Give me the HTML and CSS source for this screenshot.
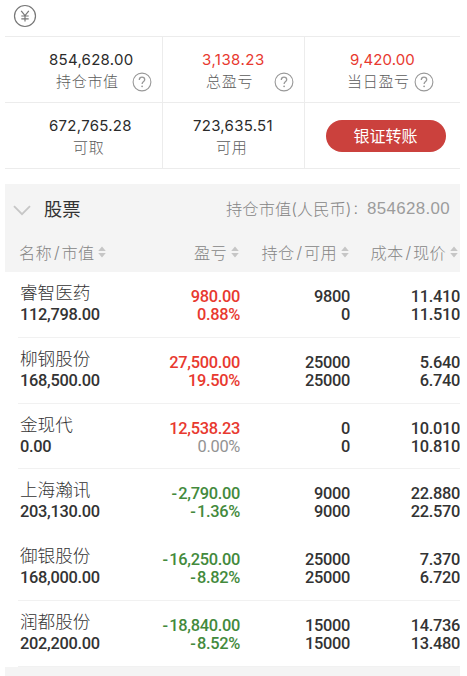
FILE: index.html
```html
<!DOCTYPE html>
<html lang="zh-CN">
<head>
<meta charset="utf-8">
<title>持仓</title>
<link rel="stylesheet" href="styles.css">
</head>
<body>
<svg class="defs" width="0" height="0">
  <symbol id="help" viewBox="0 0 20 20"><g fill="none" stroke="#999" stroke-width="1.1"><circle cx="10" cy="10" r="8.9"/><path stroke-width="1.3" d="M7.3 8c0-1.8 1.1-2.8 2.7-2.8s2.7 1 2.7 2.5c0 1.9-2.6 2-2.6 4.4"/></g><circle cx="10.1" cy="14.3" r=".9" fill="#999"/></symbol>
  <symbol id="sort" viewBox="0 0 8 12"><path fill="#c6c6c6" d="M4 .6 7.8 5H.2zM4 11.4 7.8 7H.2z"/></symbol>
</svg>
<main class="page">
  <header class="top">
    <svg class="yen" viewBox="0 0 24 24"><g fill="none" stroke="#777" stroke-width="1.2"><circle cx="12" cy="12" r="10.5"/><path d="M8.2 6.8 12 11.6l3.8-4.8M12 11.6v6M8.3 12h7.4M8.3 14.8h7.4"/></g></svg>
  </header>
  <section class="summary">
    <div class="cell value"><b>854,628.00</b><div class="label"><span>持仓市值</span><svg><use href="#help"/></svg></div></div>
    <div class="cell total up"><b>3,138.23</b><div class="label"><span>总盈亏</span><svg><use href="#help"/></svg></div></div>
    <div class="cell today up"><b>9,420.00</b><div class="label"><span>当日盈亏</span><svg><use href="#help"/></svg></div></div>
    <div class="cell cash"><b>672,765.28</b><div class="label"><span>可取</span></div></div>
    <div class="cell usable"><b>723,635.51</b><div class="label"><span>可用</span></div></div>
    <div class="cell action"><button class="transfer">银证转账</button></div>
  </section>
  <section class="stocks">
    <div class="heading">
      <div class="title">
        <svg class="chevron" viewBox="0 0 18 11"><path d="M1 1.2 9 9.2l8-8" fill="none" stroke="#c6c6c6" stroke-width="1.8"/></svg>
        <h2>股票</h2>
        <span class="worth">持仓市值(人民币)<i>:</i><em>854628.00</em></span>
      </div>
      <div class="cols">
        <span>名称<i>/</i>市值<svg><use href="#sort"/></svg></span>
        <span>盈亏<svg><use href="#sort"/></svg></span>
        <span>持仓<i>/</i>可用<svg><use href="#sort"/></svg></span>
        <span>成本<i>/</i>现价<svg><use href="#sort"/></svg></span>
      </div>
    </div>
    <div class="row"><div class="stock"><span>睿智医药</span><b>112,798.00</b></div><div class="num up">980.00<br>0.88%</div><div class="num">9800<br>0</div><div class="num">11.410<br>11.510</div></div>
    <div class="row"><div class="stock"><span>柳钢股份</span><b>168,500.00</b></div><div class="num up">27,500.00<br>19.50%</div><div class="num">25000<br>25000</div><div class="num">5.640<br>6.740</div></div>
    <div class="row"><div class="stock"><span>金现代</span><b>0.00</b></div><div class="num up">12,538.23<br><span class="flat">0.00%</span></div><div class="num">0<br>0</div><div class="num">10.010<br>10.810</div></div>
    <div class="row plain"><div class="stock"><span>上海瀚讯</span><b>203,130.00</b></div><div class="num down"><i>-</i>2,790.00<br><i>-</i>1.36%</div><div class="num">9000<br>9000</div><div class="num">22.880<br>22.570</div></div>
    <div class="row"><div class="stock"><span>御银股份</span><b>168,000.00</b></div><div class="num down"><i>-</i>16,250.00<br><i>-</i>8.82%</div><div class="num">25000<br>25000</div><div class="num">7.370<br>6.720</div></div>
    <div class="row"><div class="stock"><span>润都股份</span><b>202,200.00</b></div><div class="num down"><i>-</i>18,840.00<br><i>-</i>8.52%</div><div class="num">15000<br>15000</div><div class="num">14.736<br>13.480</div></div>
    <div class="foot"></div>
  </section>
</main>
</body>
</html>
```
FILE: styles.css
```css
* { box-sizing: border-box; }
body { margin: 0; background: #fff; color: #333; font-family: Inter, "Noto Sans CJK SC", sans-serif; }
.defs { display: block; height: 0; }
.page { width: 455px; height: 676px; margin-left: 5px; overflow: hidden; }
.top { height: 36px; padding: 4px 0 0 8px; }
.yen { display: block; width: 24px; height: 24px; }

.summary { display: grid; grid-template-columns: 158px 142px 155px; grid-template-rows: 66px 66px; height: 133px; border-top: 1px solid #ececec; }
.cell { border-bottom: 1px solid #ececec; border-right: 1px solid #ececec; padding-top: 11px; }
.cell:nth-child(3n) { border-right: 0; }
.cell b { display: block; height: 22px; line-height: 23px; font-size: 15px; font-weight: 400; letter-spacing: .27px; color: #2b2b2b; }
.cell.up b { color: #e8392f; }
.label { display: flex; align-items: center; height: 22px; font-size: 15px; letter-spacing: .7px; color: #5c5c5c; font-weight: 300; }
.label span { margin-top: -2px; }
.label svg { width: 20px; height: 20px; margin-top: 2px; }
.value { padding-left: 44px; }
.value .label { padding-left: 7px; }
.value svg { margin-left: 13px; }
.total { padding-left: 39px; }
.total b { letter-spacing: .45px; }
.total .label { padding-left: 4px; }
.total svg { margin-left: 21px; }
.today { padding-left: 45px; }
.today b { letter-spacing: .1px; }
.today .label { margin-left: -3px; }
.today svg { margin-left: 4px; }
.cash { padding-left: 44px; }
.cash .label { padding-left: 24px; }
.usable { padding-left: 30px; }
.usable .label { padding-left: 23px; }
.action { padding: 17px 0 0 21px; }
.transfer { display: block; width: 120px; height: 32px; padding: 0 1px 1px 0; border: 0; border-radius: 16px; background: #cb413d; color: #fff; font: 400 16px/31px "Noto Sans CJK SC", sans-serif; }

.stocks { margin-top: 15px; }
.heading { height: 88px; background: #f4f4f4; }
.title { display: flex; align-items: center; height: 50px; padding: 0 10px 0 8px; }
.chevron { width: 18px; height: 11px; margin-top: 2px; }
.title h2 { margin: -2px auto 0 13px; font-size: 18.3px; font-weight: 400; color: #333; }
.worth { display: flex; align-items: center; margin-top: -2px; font-size: 16.3px; font-weight: 300; color: #858585; }
.worth i { margin-left: 2px; font-style: normal; }
.worth em { margin: 1px 0 0 9px; font: 400 16.9px "Liberation Sans", sans-serif; letter-spacing: .35px; color: #9c9c9c; }
.cols, .row { display: grid; grid-template-columns: 130px 105px 110px 110px; }
.cols { height: 38px; font-size: 16.2px; font-weight: 300; letter-spacing: .3px; color: #858585; }
.cols span { display: flex; align-items: center; justify-content: flex-end; height: 36px; padding-right: 1px; white-space: nowrap; }
.cols span:last-child { padding-right: 2px; }
.cols span:first-child { justify-content: flex-start; padding-left: 14px; }
.cols i { margin: 0 1.7px 0 1.9px; font-style: normal; }
.cols svg { width: 8px; height: 12px; margin-left: 4px; }

.row { position: relative; height: 65.8px; color: #333; }
.row::after { content: ""; position: absolute; left: 13px; right: 0; bottom: 0; height: 1px; background: #f1f1f1; }
.row.plain::after { display: none; }
.stock { padding: 10px 0 0 15px; }
.stock span { display: block; height: 22px; line-height: 22px; font-size: 17.6px; font-weight: 300; white-space: nowrap; }
.stock b, .num { font: 500 16.4px/18px Roboto, sans-serif; letter-spacing: -.3px; }
.stock b { display: block; margin-top: 2px; }
.num { padding-top: 16px; text-align: right; }
.num i { margin-right: 1.5px; font-style: normal; }
.up { color: #e8392f; }
.down { color: #438a3c; }
.flat { color: #939393; font-weight: 400; }
.foot { height: 12px; background: #f4f4f4; }
```
